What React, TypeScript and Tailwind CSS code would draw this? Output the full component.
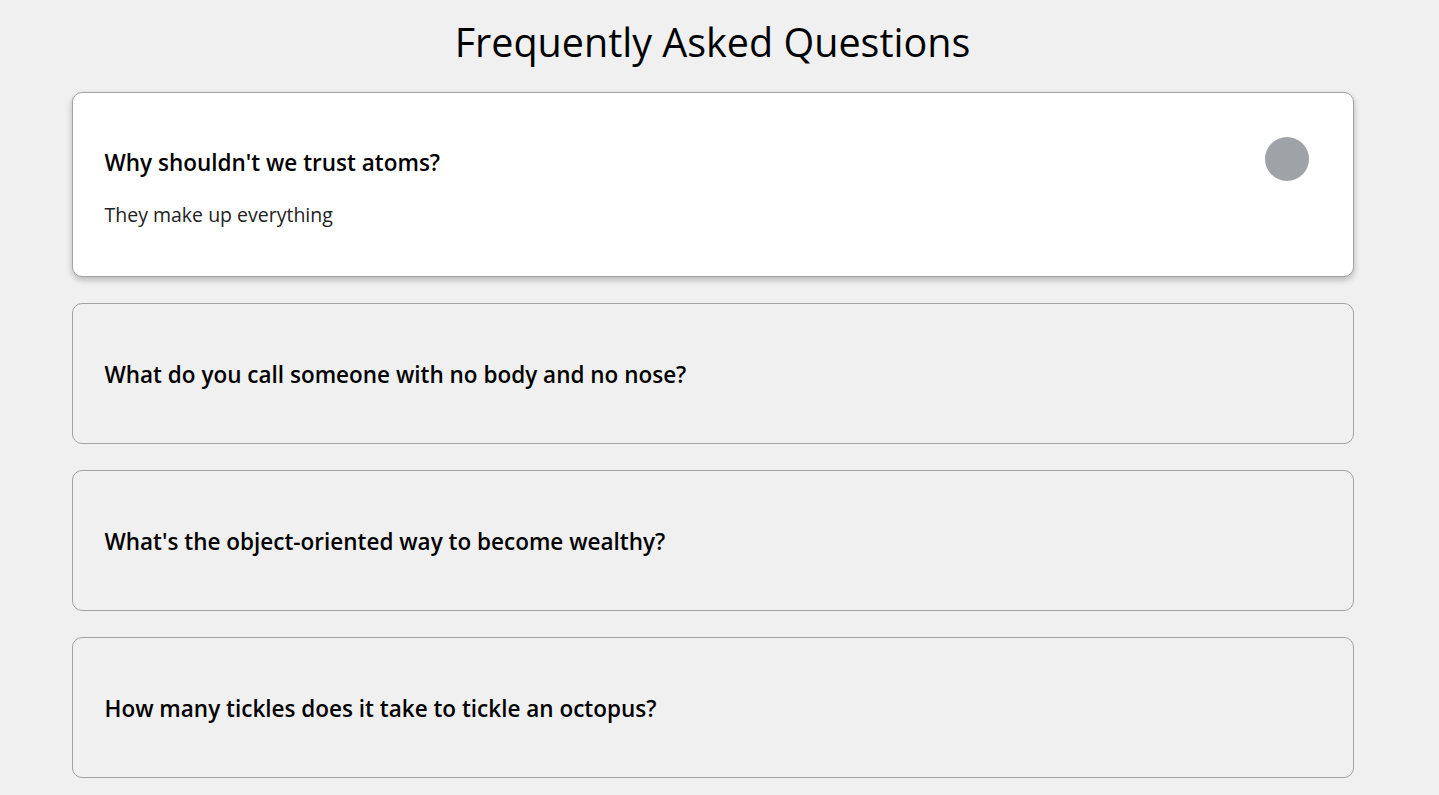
import React from "react";

const faqs = [
  { q: "Why shouldn't we trust atoms?", a: "They make up everything", open: true },
  { q: "What do you call someone with no body and no nose?", a: "Nobody knows.", open: false },
  { q: "What's the object-oriented way to become wealthy?", a: "Inheritance.", open: false },
  { q: "How many tickles does it take to tickle an octopus?", a: "Ten-tickles!", open: false },
];

export default function App() {
  return (
    <div
      className="h-screen overflow-hidden bg-[#f0f0f0] text-black pr-[14px]"
      style={{ fontFamily: "'Open Sans', 'Noto Sans', sans-serif" }}
    >
      <h1 className="text-center text-[39.5px] leading-[50px] font-normal pt-[17px] m-0">
        Frequently Asked Questions
      </h1>
      <div className="w-[1282px] mx-auto mt-[25px] flex flex-col gap-[26px]">
        {faqs.map((f, i) => (
          <div
            key={i}
            className={
              f.open
                ? "relative border border-[#a0a3a6] rounded-[10px] bg-white px-[32px] pt-[53px] pb-[47px] shadow-[0_3px_6px_rgba(0,0,0,0.12),0_3px_6px_rgba(0,0,0,0.12)]"
                : "relative border border-[#a0a3a6] rounded-[10px] bg-transparent px-[32px] pt-[54px] pb-[52px]"
            }
          >
            <h3 className="m-0 text-[22.5px] leading-[33px] font-semibold pr-[45px]">{f.q}</h3>
            {f.open && (
              <p className="mt-[22px] mb-0 text-[19.5px] leading-[28px] text-[#222]">{f.a}</p>
            )}
            {f.open && (
              <div className="absolute top-[44px] right-[44px] w-[44px] h-[44px] rounded-full bg-[#9fa3a7]" />
            )}
          </div>
        ))}
      </div>
    </div>
  );
}
